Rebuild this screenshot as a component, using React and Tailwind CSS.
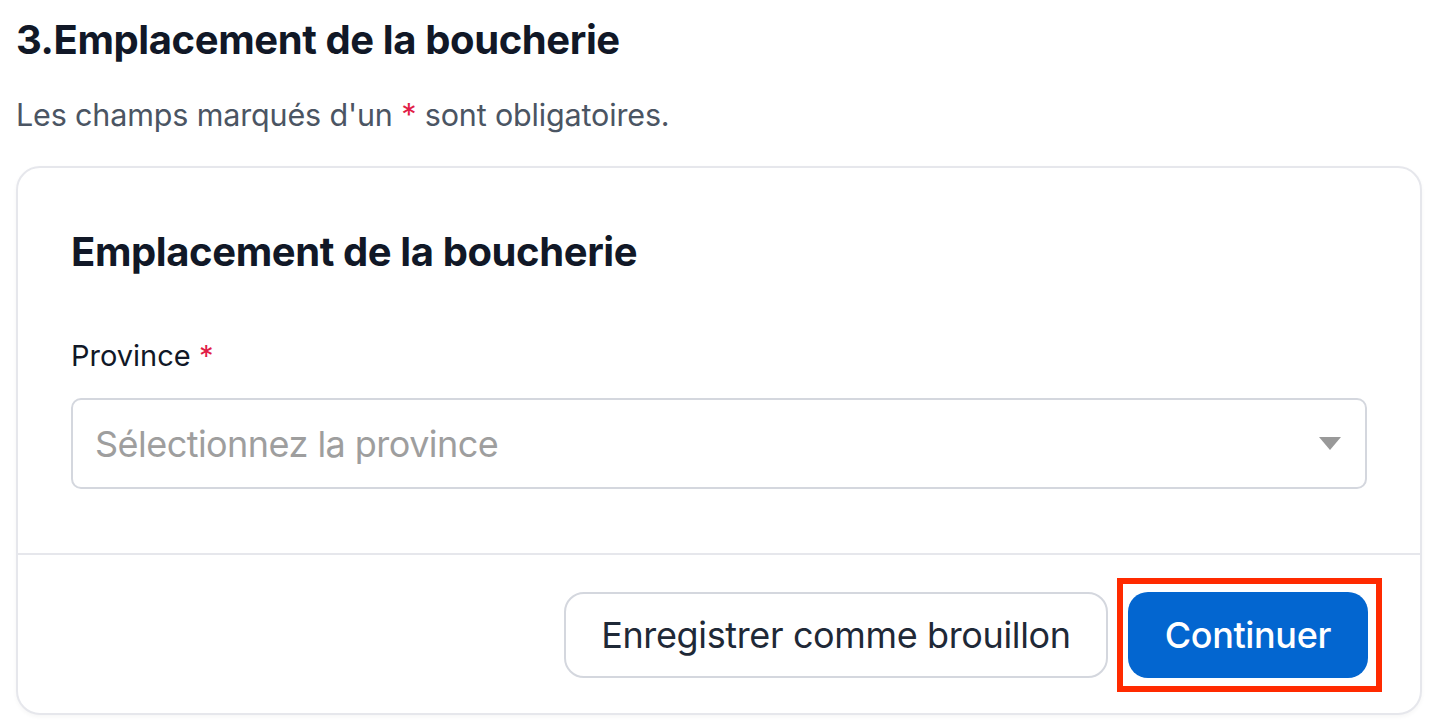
export default function App() {
  return (
    <div className="min-h-screen w-full bg-white" style={{ fontFamily: 'Inter, "Noto Sans", sans-serif' }}>
      <div className="px-4 pt-[14px]">
        <h1 className="text-[40px] font-bold leading-[52px] tracking-[-0.01em] text-[#111827]">3.Emplacement de la boucherie</h1>
        <p className="mt-[29px] text-[30.5px] leading-[40px] text-[#4b5563] tracking-[-0.005em]">
          Les champs marqués d'un <span className="text-[#e11d48]">*</span> sont obligatoires.
        </p>
        <div className="mt-[31px] w-[1406px] rounded-[24px] border-2 border-[#e6e7ec] bg-white shadow-[0_2px_4px_rgba(0,0,0,0.04)]">
          <div className="px-[53px] pt-[58px] pb-[64px]">
            <h2 className="text-[40px] font-bold leading-[52px] tracking-[-0.01em] text-[#111827]">Emplacement de la boucherie</h2>
            <div className="mt-[58px] text-[29px] leading-[40px] text-[#111827]">
              Province <span className="text-[#e11d48]">*</span>
            </div>
            <div className="mt-[22px] flex h-[91px] items-center justify-between rounded-[10px] border-2 border-[#d4d7de] pl-[22px] pr-[24px]">
              <span className="text-[36px] text-[#9e9e9e] tracking-[-0.015em]">Sélectionnez la province</span>
              <svg width="22" height="13" viewBox="0 0 22 13"><path d="M0 0H22L11 13Z" fill="#999999" /></svg>
            </div>
          </div>
          <div className="h-[2px] bg-[#e6e7ec]" />
          <div className="flex items-center justify-end gap-[9px] pr-[38px] pt-[23px] pb-[21px]">
            <button className="h-[86px] rounded-[20px] border-2 border-[#d4d7de] bg-white px-[35px] text-[36px] text-[#1f2937] tracking-[-0.01em]">
              Enregistrer comme brouillon
            </button>
            <div className="border-[6px] border-[#ff2a00] py-[8px] pl-[5px] pr-[8px]">
              <button className="flex h-[86px] items-center rounded-[20px] bg-[#0366d0] px-[37px] text-[36px] font-medium text-white tracking-[-0.01em]">
                Continuer
              </button>
            </div>
          </div>
        </div>
      </div>
    </div>
  );
}
